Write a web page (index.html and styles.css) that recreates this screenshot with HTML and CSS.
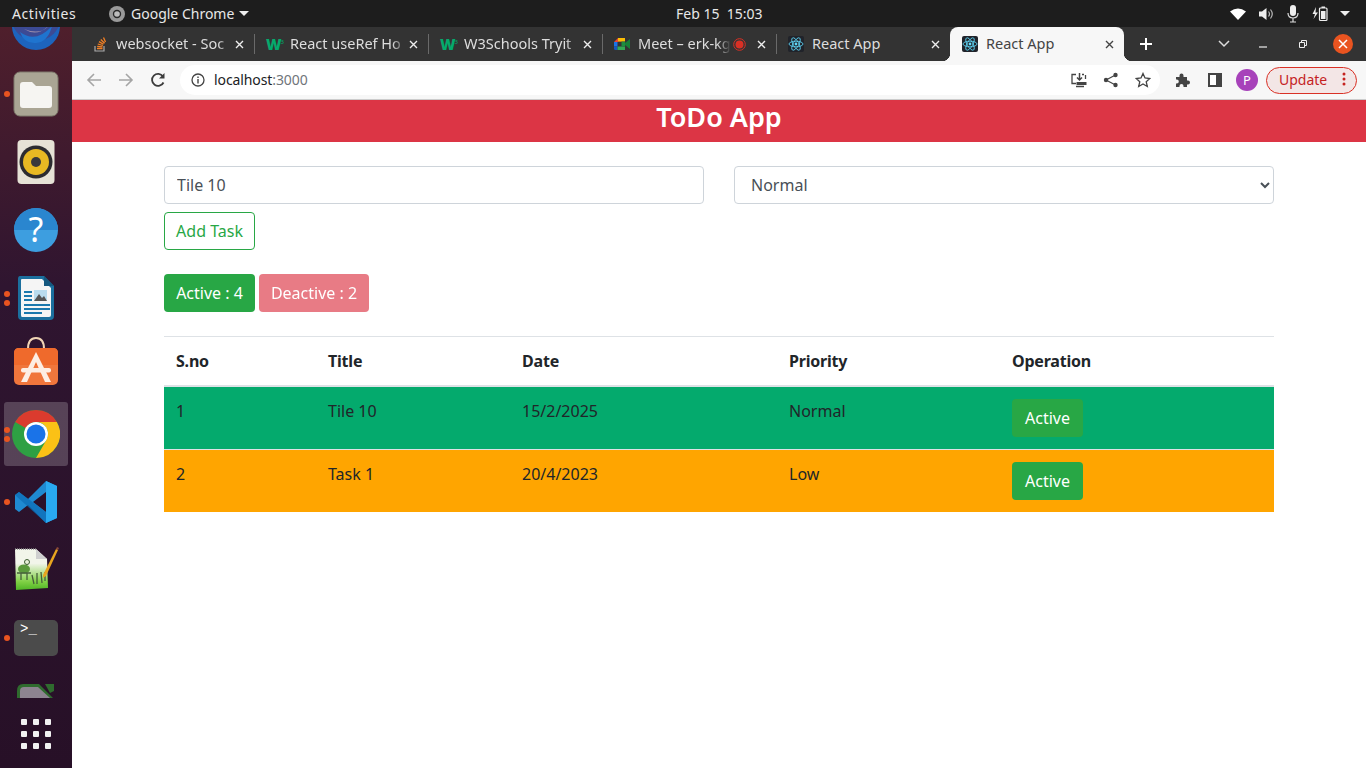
FILE: index.html
```html
<!DOCTYPE html>
<html lang="en">
<head>
    <meta charset="UTF-8">
    <meta name="viewport" content="width=device-width, initial-scale=1.0">
    <title>React App</title>
    <link rel="stylesheet" href="styles.css">
</head>
<body>
    <div class="topbar">
        <div class="top-left">
            <span class="activities">Activities</span>
            <svg class="chrome-mono" width="16" height="16" viewBox="0 0 16 16"><circle cx="8" cy="8" r="8" fill="#9a9a9a"/><circle cx="8" cy="8" r="4.2" fill="#2a2a2a"/><circle cx="8" cy="8" r="2.8" fill="#bdbdbd"/></svg>
            <span class="app-name">Google Chrome</span>
            <span class="caret"></span>
        </div>
        <span class="clock">Feb 15&nbsp; 15:03</span>
        <div class="top-right">
            <svg width="16" height="12" viewBox="0 0 16 12"><path d="M0 3.500 Q8 -2.500 16 3.500 L8 12Z" fill="#fff"/></svg>
            <svg width="16" height="14" viewBox="0 0 16 14"><path d="M1 4.500h3L8.500 1v12L4 9.500H1Z" fill="#eee"/><path d="M10.500 4.500q2 2.500 0 5M12.500 2.500q3.500 4.500 0 9" fill="none" stroke="#bbb" stroke-width="1.200"/></svg>
            <svg width="14" height="18" viewBox="0 0 14 18"><rect x="4" y="0" width="6" height="11" rx="3" fill="#eee"/><path d="M2 8q0 5 5 5t5-5M7 13v4M4 17h6" fill="none" stroke="#ddd" stroke-width="1.200"/></svg>
            <svg width="16" height="16" viewBox="0 0 16 16"><path d="M4 1 0.500 8H3L1.500 13 6 6.500H3.500Z" fill="#eee"/><rect x="7.500" y="2" width="7.500" height="12.500" rx="1" fill="none" stroke="#eee" stroke-width="1.200"/><rect x="9.500" y="0.500" width="3.500" height="1.500" fill="#eee"/><rect x="9" y="5" width="4.500" height="8" fill="#eee"/></svg>
            <span class="caret"></span>
        </div>
    </div>

    <div class="desktop">
        <div class="dock">
            <div class="dock-list">
                <div class="dock-item">
                    <svg width="48" height="48" viewBox="0 0 48 48"><circle cx="24" cy="24" r="24" fill="#1d64bd"/><circle cx="24" cy="14" r="25" fill="#3c4a94"/><path d="M8 30q16 12 32 -6q-4 16-16 17T8 30Z" fill="#1f74cf"/><path d="M12 27q14 9 26-5q-8 12-26 5Z" fill="#9a8cab"/></svg>
                </div>
                <div class="dock-item">
                    <i class="dot one"></i>
                    <svg width="46" height="46" viewBox="0 0 46 46"><rect x="1" y="1" width="44" height="44" rx="6" fill="#aaa594" stroke="#7e7a6c"/><path d="M7 14q0-3 3-3h9l4 4h13q3 0 3 3v16q0 3-3 3H10q-3 0-3-3Z" fill="#f6f5f2"/></svg>
                </div>
                <div class="dock-item">
                    <svg width="38" height="46" viewBox="0 0 38 46"><rect x="0.500" y="1" width="37" height="44" rx="4" fill="#e6e2d6"/><circle cx="19" cy="23" r="16.500" fill="#2c2c30"/><circle cx="19" cy="23" r="13" fill="#e8b923"/><circle cx="19" cy="23" r="5" fill="#38383c"/></svg>
                </div>
                <div class="dock-item">
                    <svg width="46" height="46" viewBox="0 0 46 46"><circle cx="23" cy="23" r="22" fill="#3d9ee0"/><path d="M1 23a22 22 0 0 1 44 0Z" fill="#2a86cf"/><text x="23" y="35" text-anchor="middle" class="help-mark">?</text></svg>
                </div>
                <div class="dock-item">
                    <i class="dot two"></i>
                    <svg width="38" height="46" viewBox="0 0 38 46"><path d="M3 1h24l10 10v30q0 4-4 4H5q-4 0-4-4V4q0-3 2-3Z" fill="#1b6f9e"/><path d="M5 4h20l9 9v27q0 2-2 2H5q-1 0-1-2V5q0-1 1-1Z" fill="#f5f5f5"/><path d="M27 1l10 10h-10Z" fill="#14587f"/><path d="M7 16h8v2H7ZM7 20h8v2H7ZM7 24h8v2H7ZM7 29h26v2H7ZM7 33h26v2H7ZM7 37h18v2H7Z" fill="#1b78ad"/><rect x="17" y="15" width="13" height="11" fill="#b9dcee"/><path d="M17 26l5-7 3 4 2-2 3 5Z" fill="#555"/></svg>
                </div>
                <div class="dock-item">
                    <svg width="46" height="66" viewBox="0 0 46 66"><path d="M15 16q0-11 8-11t8 11" fill="none" stroke="#f1d5b5" stroke-width="2"/><rect x="1" y="15" width="44" height="37" rx="5" fill="#f0763c"/><path d="M6 15h34q5 0 5 5v12H1V20q0-5 5-5Z" fill="#ef6a2c"/><path d="M23 19 38 49h-6L23 29 14 49H8Z" fill="#fdeee4"/><rect x="8" y="35" width="30" height="4.500" rx="2" fill="#fdeee4"/></svg>
                </div>
                <div class="dock-item is-current">
                    <i class="dot two"></i>
                    <svg width="48" height="48" viewBox="0 0 48 48"><circle cx="24" cy="24" r="24" fill="#2ea043"/><path d="M24 0a24 24 0 0 1 20.800 12H24a12 12 0 0 0-10.400 6L3.200 12A24 24 0 0 1 24 0Z" fill="#db3b2e"/><path d="M44.800 12A24 24 0 0 1 24 48l10.400-18A12 12 0 0 0 24 12Z" fill="#fbc116"/><circle cx="24" cy="24" r="12" fill="#fff"/><circle cx="24" cy="24" r="9.500" fill="#1a73e8"/></svg>
                </div>
                <div class="dock-item">
                    <i class="dot one"></i>
                    <svg width="44" height="44" viewBox="0 0 44 44"><path d="M32 1 43 6v32l-11 5L14 25 5 32 1 29v-14l4-3 9 7Z" fill="#1f8ad2"/><path d="M32 1 43 6v32l-11 5Z" fill="#29a9f0"/><path d="M32 12 19 22l13 10Z" fill="#2b1029"/><path d="M5 12 32 32v11L1 15Z" fill="#0c6cb5" opacity="0.700"/></svg>
                </div>
                <div class="dock-item">
                    <svg width="46" height="46" viewBox="0 0 46 46"><defs><linearGradient id="padGreen" x1="0" y1="0" x2="0" y2="1"><stop offset="0.350" stop-color="#f2f5ea"/><stop offset="0.800" stop-color="#7fd044"/><stop offset="1" stop-color="#4fb526"/></linearGradient></defs><path d="M2 2h21l11 10 1 29-32 2Z" fill="url(#padGreen)"/><path d="M2 2h21" stroke="#888" stroke-width="1.500" stroke-dasharray="1 1"/><path d="M23 2l11 10H23Z" fill="#cfcfcf"/><ellipse cx="11" cy="22" rx="6" ry="4.500" fill="#5b9a3c"/><circle cx="14" cy="15" r="2.500" fill="#e8f0d8" stroke="#3b5a30"/><path d="M4 26h14M8 26v7M14 26v7M19 28l2 9M24 26v11M28 25l1 11M32 25v9" stroke="#46603a" stroke-width="1.300"/><path d="M30 28 43 2l2 1-12 26-3 2Z" fill="#e8a51f"/><path d="M43 2l2 1 1-2-2-1Z" fill="#8a4a3a"/></svg>
                </div>
                <div class="dock-item">
                    <i class="dot one"></i>
                    <div class="term">&gt;_</div>
                </div>
                <div class="dock-item">
                    <svg width="38" height="46" viewBox="0 0 38 46"><path d="M0 8Q0 1 6 1H22L36 15H0Z" fill="#2f6b2e"/><path d="M3 15V8Q3 4 7 4H21L33 15Z" fill="#8d8490"/><path d="M28 1H37V8L33 10Z" fill="#2f6b2e"/></svg>
                </div>
            </div>
            <div class="apps-grid">
                <i></i><i></i><i></i><i></i><i></i><i></i><i></i><i></i><i></i>
            </div>
        </div>

        <div class="window">
            <div class="tabstrip">
                <div class="tab">
                    <svg class="fav" width="16" height="16" viewBox="0 0 16 16"><path d="M3 10v5h9v-5" fill="none" stroke="#aaa" stroke-width="1.200"/><path d="M5 12.500h5.500M5.200 10.300l5.300.6M5.800 8l5.100 1.500M7 5.600l4.500 2.700M8.800 3.500l3.800 3.800M11.500 1.500l2 4.500" fill="none" stroke="#f48024" stroke-width="1.300"/></svg>
                    <span class="tab-title">websocket - Soc</span>
                    <svg class="tab-close" width="9" height="9" viewBox="0 0 9 9"><path d="M1 1l7 7M8 1l-7 7" stroke="#eee" stroke-width="1.400"/></svg>
                </div>
                <div class="tab">
                    <span class="fav w3">W<sup>3</sup></span>
                    <span class="tab-title">React useRef Ho</span>
                    <svg class="tab-close" width="9" height="9" viewBox="0 0 9 9"><path d="M1 1l7 7M8 1l-7 7" stroke="#eee" stroke-width="1.400"/></svg>
                </div>
                <div class="tab">
                    <span class="fav w3">W<sup>3</sup></span>
                    <span class="tab-title">W3Schools Tryit</span>
                    <svg class="tab-close" width="9" height="9" viewBox="0 0 9 9"><path d="M1 1l7 7M8 1l-7 7" stroke="#eee" stroke-width="1.400"/></svg>
                </div>
                <div class="tab">
                    <svg class="fav" width="16" height="16" viewBox="0 0 16 16"><path d="M0 6 4 2h7v3.500H4V6Z" fill="#ea4335"/><path d="M4 2h7v3.500H4Z" fill="#fbbc04"/><path d="M0 6h3.500v4.500H0Z" fill="#1a73e8"/><path d="M0 10.500h3.500V14H1.500Q0 14 0 12.500Z" fill="#1558c0"/><path d="M3.500 10.500H11V14H3.500Z" fill="#34a853"/><path d="M7.500 5.500H11v5H7.500Z" fill="#1e8e3e"/><path d="M11 7l5-4v10l-5-4Z" fill="#188038"/></svg>
                    <span class="tab-title">Meet – erk-kg</span>
                    <svg class="rec" width="13" height="13" viewBox="0 0 13 13"><circle cx="6.500" cy="6.500" r="5.800" fill="none" stroke="#d93025"/><circle cx="6.500" cy="6.500" r="4" fill="#d93025"/></svg>
                    <svg class="tab-close" width="9" height="9" viewBox="0 0 9 9"><path d="M1 1l7 7M8 1l-7 7" stroke="#eee" stroke-width="1.400"/></svg>
                </div>
                <div class="tab">
                    <svg class="fav" width="16" height="16" viewBox="0 0 16 16"><rect width="16" height="16" rx="2" fill="#20232a"/><g fill="none" stroke="#61dafb" stroke-width="0.800"><ellipse cx="8" cy="8" rx="7" ry="2.800"/><ellipse cx="8" cy="8" rx="7" ry="2.800" transform="rotate(60 8 8)"/><ellipse cx="8" cy="8" rx="7" ry="2.800" transform="rotate(120 8 8)"/></g><circle cx="8" cy="8" r="1.400" fill="#61dafb"/></svg>
                    <span class="tab-title">React App</span>
                    <svg class="tab-close" width="9" height="9" viewBox="0 0 9 9"><path d="M1 1l7 7M8 1l-7 7" stroke="#eee" stroke-width="1.400"/></svg>
                </div>
                <div class="tab active">
                    <svg class="fav" width="16" height="16" viewBox="0 0 16 16"><rect width="16" height="16" rx="2" fill="#20232a"/><g fill="none" stroke="#61dafb" stroke-width="0.800"><ellipse cx="8" cy="8" rx="7" ry="2.800"/><ellipse cx="8" cy="8" rx="7" ry="2.800" transform="rotate(60 8 8)"/><ellipse cx="8" cy="8" rx="7" ry="2.800" transform="rotate(120 8 8)"/></g><circle cx="8" cy="8" r="1.400" fill="#61dafb"/></svg>
                    <span class="tab-title">React App</span>
                    <svg class="tab-close" width="9" height="9" viewBox="0 0 9 9"><path d="M1 1l7 7M8 1l-7 7" stroke="#444" stroke-width="1.400"/></svg>
                </div>
                <svg class="new-tab" width="12" height="12" viewBox="0 0 12 12"><path d="M6 0v12M0 6h12" stroke="#fff" stroke-width="2"/></svg>
                <div class="win-controls">
                    <svg width="12" height="8" viewBox="0 0 12 8"><path d="M1 1l5 5 5-5" fill="none" stroke="#ddd" stroke-width="1.500"/></svg>
                    <svg class="win-min" width="8" height="8" viewBox="0 0 8 8"><path d="M0 7h8" stroke="#eee" stroke-width="1.200"/></svg>
                    <svg class="win-max" width="8" height="8" viewBox="0 0 8 8"><path d="M2.500 2V.5h5v5H6M.5 2.500h5v5h-5Z" fill="none" stroke="#eee"/></svg>
                    <span class="win-close"><svg width="10" height="10" viewBox="0 0 10 10"><path d="M1 1l8 8M9 1l-8 8" stroke="#fff" stroke-width="1.500"/></svg></span>
                </div>
            </div>

            <div class="toolbar">
                <svg class="nav" width="16" height="16" viewBox="0 0 16 16"><path d="M15 8H2M8 2 2 8l6 6" fill="none" stroke="#a5a5a5" stroke-width="1.600"/></svg>
                <svg class="nav" width="16" height="16" viewBox="0 0 16 16"><path d="M1 8h13M8 2l6 6-6 6" fill="none" stroke="#a5a5a5" stroke-width="1.600"/></svg>
                <svg class="nav" width="16" height="16" viewBox="0 0 16 16"><path d="M13.500 10.500A6 6 0 1 1 13 4.500" fill="none" stroke="#3c3c3c" stroke-width="1.800"/><path d="M14.500 1v5.500H9Z" fill="#3c3c3c"/></svg>
                <div class="omnibox">
                    <svg width="14" height="14" viewBox="0 0 14 14"><circle cx="7" cy="7" r="6" fill="none" stroke="#444" stroke-width="1.300"/><path d="M7 6v4.500M7 3.500v1.500" stroke="#444" stroke-width="1.400"/></svg>
                    <span class="url">localhost<span class="url-port">:3000</span></span>
                    <div class="omni-icons">
                        <svg width="16" height="16" viewBox="0 0 16 16"><path d="M5 2.500H1v9h4M11 2.500h2" fill="none" stroke="#444" stroke-width="1.300"/><path d="M14.500 3v4" stroke="#444" stroke-width="1.300"/><path d="M8.500 1v7M6 5.500 8.500 8 11 5.500" fill="none" stroke="#444" stroke-width="1.500"/><path d="M5 14.500h8" stroke="#444" stroke-width="1.500"/><path d="M5.500 10h10v3h-10Z" fill="#444"/></svg>
                        <svg width="16" height="16" viewBox="0 0 16 16"><circle cx="12.500" cy="3" r="2.200" fill="#444"/><circle cx="3" cy="8" r="2.200" fill="#444"/><circle cx="12.500" cy="13" r="2.200" fill="#444"/><path d="M12.500 3 3 8l9.500 5" fill="none" stroke="#444" stroke-width="1.200"/></svg>
                        <svg width="16" height="16" viewBox="0 0 16 16"><path d="M8 1.500 10 6l4.800.5-3.600 3.200L12.300 14.500 8 12l-4.300 2.500 1.100-4.800L1.200 6.500 6 6Z" fill="none" stroke="#444" stroke-width="1.300"/></svg>
                    </div>
                </div>
                <svg class="ext" width="16" height="16" viewBox="0 0 16 16"><path d="M1 5h3.500V3.500a2 2 0 0 1 4 0V5H12v3.500h1a2 2 0 0 1 0 4h-1V15H8.500v-1a2 2 0 0 0-4 0v1H1v-3.500h.8a2 2 0 0 0 0-4H1Z" fill="#444"/></svg>
                <svg class="ext panel" width="14" height="14" viewBox="0 0 14 14"><rect x="1" y="1" width="12" height="12" fill="#fff" stroke="#444" stroke-width="2"/><rect x="8" y="1" width="5" height="12" fill="#444"/></svg>
                <span class="avatar">P</span>
                <div class="update">
                    <span>Update</span>
                    <svg width="4" height="14" viewBox="0 0 4 14"><circle cx="2" cy="2" r="1.500" fill="#c5221f"/><circle cx="2" cy="7" r="1.500" fill="#c5221f"/><circle cx="2" cy="12" r="1.500" fill="#c5221f"/></svg>
                </div>
            </div>

            <div class="page">
                <h1 class="app-title">ToDo App</h1>
                <div class="container">
                    <div class="form-row">
                        <input class="field" type="text" value="Tile 10">
                        <select class="field">
                            <option>Normal</option>
                            <option>Low</option>
                            <option>High</option>
                        </select>
                    </div>
                    <button class="btn btn-outline">Add Task</button>
                    <div class="counts">
                        <button class="btn btn-success">Active : 4</button>
                        <button class="btn btn-faded">Deactive : 2</button>
                    </div>
                    <table class="tasks">
                        <thead>
                            <tr>
                                <th class="col-no">S.no</th>
                                <th class="col-title">Title</th>
                                <th class="col-date">Date</th>
                                <th class="col-priority">Priority</th>
                                <th>Operation</th>
                            </tr>
                        </thead>
                        <tbody>
                            <tr class="row-normal">
                                <td>1</td>
                                <td>Tile 10</td>
                                <td>15/2/2025</td>
                                <td>Normal</td>
                                <td><button class="btn btn-success">Active</button></td>
                            </tr>
                            <tr class="row-low">
                                <td>2</td>
                                <td>Task 1</td>
                                <td>20/4/2023</td>
                                <td>Low</td>
                                <td><button class="btn btn-success">Active</button></td>
                            </tr>
                        </tbody>
                    </table>
                </div>
            </div>
        </div>
    </div>
</body>
</html>
```

FILE: styles.css
```css
* {
    box-sizing: border-box;
}
html, body {
    margin: 0;
    height: 100%;
    overflow: hidden;
}
body {
    font-family: "Noto Sans", "Open Sans", sans-serif;
    font-size: 16px;
    color: #212529;
    background: #fff;
    display: flex;
    flex-direction: column;
}

/* gnome top bar */
.topbar {
    height: 27px;
    flex: none;
    display: flex;
    align-items: center;
    padding-left: 12px;
    background: #1d1d1d;
    color: #e8e8e8;
    font-size: 14px;
}
.top-left {
    width: 664px;
    display: flex;
    align-items: center;
}
.activities {
    width: 97px;
    letter-spacing: 0.6px;
}
.app-name {
    margin-left: 6px;
}
.caret {
    width: 0;
    height: 0;
    margin-left: 5px;
    border-left: 5px solid transparent;
    border-right: 5px solid transparent;
    border-top: 5px solid #eee;
}
.top-right {
    margin-left: auto;
    padding-right: 16px;
    display: flex;
    align-items: center;
    gap: 12px;
}
.top-right .caret {
    margin-left: 0;
}

.desktop {
    flex: 1;
    display: flex;
    min-height: 0;
}

/* dock */
.dock {
    width: 72px;
    flex: none;
    display: flex;
    flex-direction: column;
    background: linear-gradient(#4f1f2c, #2f1530 35%, #271027);
}
.dock-list {
    flex: 1;
    min-height: 0;
    overflow: hidden;
}
.dock-item {
    position: relative;
    height: 68px;
    display: flex;
    align-items: center;
    justify-content: center;
}
.dock-item:first-child {
    margin-top: -35px;
}
.dock-item.is-current::before {
    content: "";
    position: absolute;
    left: 4px;
    top: 2px;
    width: 64px;
    height: 64px;
    border-radius: 3px;
    background: rgba(255,255,255,0.2);
}
.dock-item svg {
    position: relative;
}
.dot {
    position: absolute;
    left: 4px;
    width: 6px;
    height: 6px;
    border-radius: 50%;
    background: #e95420;
    z-index: 1;
}
.dot.one {
    top: 31px;
}
.dot.two {
    top: 27px;
    box-shadow: 0 9px 0 #e95420;
}
.help-mark {
    font-family: "Noto Sans", sans-serif;
    font-size: 34px;
    fill: #fff;
}
.term {
    width: 44px;
    height: 36px;
    padding: 0 0 0 6px;
    border-radius: 5px;
    background: #4b4b4b;
    color: #fff;
    font-family: "Liberation Mono", monospace;
    font-size: 14px;
    line-height: 18px;
}
.apps-grid {
    height: 70px;
    flex: none;
    padding: 21px 20px 0;
    display: grid;
    grid-template-columns: repeat(3, 6px);
    grid-auto-rows: 6px;
    gap: 6px;
    justify-content: center;
}
.apps-grid i {
    border-radius: 1px;
    background: #f2f2f2;
}

/* chrome */
.window {
    flex: 1;
    min-width: 0;
    display: flex;
    flex-direction: column;
}
.tabstrip {
    height: 34px;
    flex: none;
    display: flex;
    align-items: center;
    padding-left: 8px;
    background: #333;
    color: #ddd;
    font-size: 14.5px;
}
.tab {
    position: relative;
    width: 174px;
    height: 34px;
    flex: none;
    padding: 0 10px 0 12px;
    display: flex;
    align-items: center;
}
.tab::after {
    content: "";
    position: absolute;
    right: -1px;
    top: 7px;
    width: 1px;
    height: 20px;
    background: #6a6a6a;
}
.tab:nth-child(5)::after {
    display: none;
}
.tab.active {
    border-radius: 8px 8px 0 0;
    background: #f7f7f7;
    color: #444;
}
.tab.active::before, .tab.active::after {
    content: "";
    position: absolute;
    top: auto;
    bottom: 0;
    width: 8px;
    height: 8px;
}
.tab.active::before {
    left: -8px;
    background: radial-gradient(circle at 0 0, transparent 8px, #f7f7f7 8.5px);
}
.tab.active::after {
    right: -8px;
    background: radial-gradient(circle at 100% 0, transparent 8px, #f7f7f7 8.5px);
}
.fav {
    width: 16px;
    flex: none;
}
.w3 {
    color: #04aa6d;
    font-weight: 900;
    font-size: 15px;
    line-height: 16px;
    letter-spacing: -1px;
    white-space: nowrap;
}
.w3 sup {
    font-size: 6px;
    font-weight: 400;
    line-height: 0;
}
.tab-title {
    flex: 1;
    min-width: 0;
    margin-left: 8px;
    padding-bottom: 2px;
    overflow: hidden;
    white-space: nowrap;
}
.tab:not(:nth-child(n+5)) .tab-title {
    -webkit-mask-image: linear-gradient(to left, transparent, #000 14px);
    mask-image: linear-gradient(to left, transparent, #000 14px);
}
.tab-close {
    margin-left: 3px;
    flex: none;
}
.rec {
    flex: none;
    margin: 0 8px 0 2px;
}
.new-tab {
    margin-left: 16px;
}
.win-controls {
    margin-left: auto;
    padding-right: 13px;
    display: flex;
    align-items: center;
}
.win-min {
    margin-left: 29px;
}
.win-max {
    margin-left: 32px;
}
.win-close {
    width: 20px;
    height: 20px;
    margin-left: 26px;
    border-radius: 50%;
    background: #e95420;
    display: flex;
    align-items: center;
    justify-content: center;
}

.toolbar {
    height: 39px;
    flex: none;
    display: flex;
    align-items: center;
    padding: 0 9px 0 14px;
    background: #f7f7f7;
    border-bottom: 1px solid #ccc;
}
.nav {
    margin-right: 16px;
}
.omnibox {
    width: 980px;
    height: 30px;
    margin-left: -2px;
    padding: 0 9px 0 11px;
    flex: none;
    display: flex;
    align-items: center;
    border-radius: 15px;
    background: #fff;
    font-size: 14px;
    letter-spacing: -0.1px;
}
.url {
    margin-left: 9px;
    padding-bottom: 1px;
    color: #202124;
}
.url-port {
    color: #70757a;
}
.omni-icons {
    margin-left: auto;
    display: flex;
    align-items: center;
    gap: 16px;
}
.ext {
    margin-left: 15px;
}
.ext.panel {
    margin-left: 17px;
}
.avatar {
    width: 22px;
    height: 22px;
    margin-left: 14px;
    border-radius: 50%;
    background: #a742ba;
    color: #fff;
    font-size: 13px;
    line-height: 22px;
    text-align: center;
}
.update {
    width: 91px;
    height: 27px;
    margin-left: 8px;
    padding: 0 10px 2px 12px;
    display: flex;
    align-items: center;
    justify-content: space-between;
    border: 1px solid #d93025;
    border-radius: 14px;
    background: #f3e6e6;
    color: #c5221f;
    font-size: 14px;
}

/* the app itself */
.page {
    flex: 1;
    background: #fff;
}
.app-title {
    height: 42px;
    margin: 0;
    background: #dc3545;
    color: #fff;
    font-size: 27px;
    font-weight: 600;
    line-height: 34px;
    text-align: center;
}
.container {
    width: 1110px;
    margin: 24px auto 0;
}
.form-row {
    display: flex;
    gap: 30px;
    margin-bottom: 8px;
}
.field {
    width: 540px;
    height: 38px;
    padding: 6px 12px;
    border: 1px solid #ced4da;
    border-radius: 4px;
    background: #fff;
    color: #495057;
    font-family: inherit;
    font-size: 16px;
}
.btn {
    height: 38px;
    padding: 0;
    border: 1px solid transparent;
    border-radius: 4px;
    font-family: inherit;
    font-size: 16px;
    line-height: 24px;
    white-space: nowrap;
}
.btn-outline {
    display: block;
    width: 91px;
    border-color: #28a745;
    background: #fff;
    color: #28a745;
}
.btn-success {
    background: #28a745;
    color: #fff;
}
.btn-faded {
    background: #dc3545;
    color: #fff;
    opacity: 0.65;
}
.counts {
    display: flex;
    gap: 4px;
    margin-top: 24px;
    margin-bottom: 24px;
}
.counts .btn-success {
    width: 91px;
}
.counts .btn-faded {
    width: 110px;
}
td .btn {
    width: 71px;
}
.tasks {
    width: 100%;
    border-collapse: collapse;
    table-layout: fixed;
    border-top: 1px solid #dee2e6;
}
.tasks th, .tasks td {
    padding: 12px;
    text-align: left;
    vertical-align: top;
    line-height: 24px;
}
.tasks th {
    border-bottom: 2px solid #dee2e6;
    font-weight: 700;
    letter-spacing: -0.2px;
}
.tasks td {
    border-top: 1px solid #dee2e6;
}
.tasks thead + tbody tr:first-child td {
    border-top: none;
}
.col-no {
    width: 152px;
}
.col-title {
    width: 194px;
}
.col-date {
    width: 267px;
}
.col-priority {
    width: 223px;
}
.row-normal {
    background: #04aa6d;
}
.row-low {
    background: orange;
}
```
